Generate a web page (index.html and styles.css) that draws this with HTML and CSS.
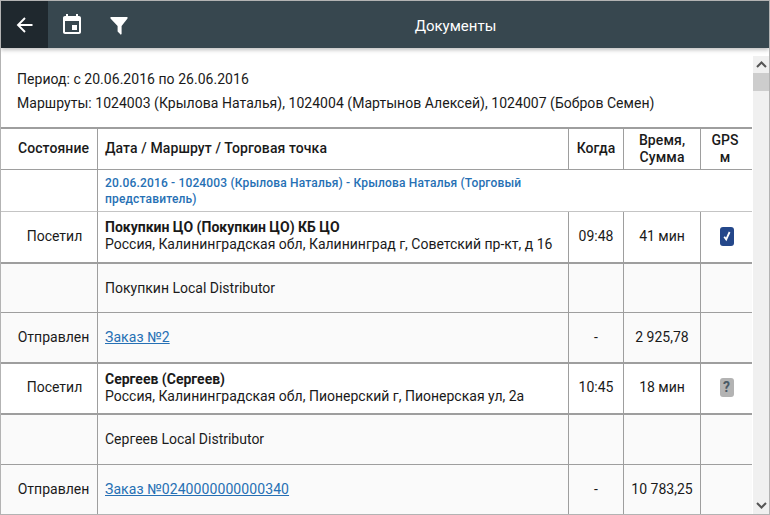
FILE: index.html
```html
<!DOCTYPE html>
<html lang="ru">
<head>
<meta charset="utf-8">
<title>Документы</title>
<link rel="stylesheet" href="styles.css">
</head>
<body>
<div class="window">
  <header class="topbar">
    <button class="tb-btn tb-active" aria-label="Назад">
      <svg width="24" height="24" viewBox="0 0 24 24"><path fill="none" stroke="#fff" stroke-width="1.9" d="M19.5 12H5.5M12 5l-7 7 7 7"/></svg>
    </button>
    <button class="tb-btn" aria-label="Календарь">
      <svg width="24" height="24" viewBox="0 0 24 24"><path fill="#fff" d="M17 12h-5v5h5v-5zM16 1v2H8V1H6v2H5c-1.11 0-2 .9-2 2v14c0 1.1.89 2 2 2h14c1.1 0 2-.9 2-2V5c0-1.1-.9-2-2-2h-1V1h-2zm3 18H5V8h14v11z"/></svg>
    </button>
    <button class="tb-btn" aria-label="Фильтр">
      <svg width="24" height="24" viewBox="0 0 24 24"><path fill="#fff" d="M3.5 4h17v1.4L14.6 13v8l-.8.8-3.2-3.2V13L3.5 5.4z"/></svg>
    </button>
    <h1 class="title">Документы</h1>
  </header>
  <div class="main">
    <div class="content">
      <div class="summary">
        <p>Период: с 20.06.2016 по 26.06.2016</p>
        <p>Маршруты: 1024003 (Крылова Наталья), 1024004 (Мартынов Алексей), 1024007 (Бобров Семен)</p>
      </div>
      <table class="grid">
        <colgroup>
          <col class="c1"><col class="c2"><col class="c3"><col class="c4"><col class="c5">
        </colgroup>
        <thead>
          <tr class="r-head">
            <th class="state">Состояние</th>
            <th class="left">Дата / Маршрут / Торговая точка</th>
            <th>Когда</th>
            <th class="two">Время,<br>Сумма</th>
            <th class="gps two">GPS<br>м</th>
          </tr>
        </thead>
        <tbody>
          <tr class="r-group">
            <td></td>
            <td colspan="4" class="group">20.06.2016 - 1024003 (Крылова Наталья) - Крылова Наталья (Торговый<br>представитель)</td>
          </tr>
          <tr class="r-visit">
            <td class="state">Посетил</td>
            <td class="left"><b>Покупкин ЦО (Покупкин ЦО) КБ ЦО</b><br>Россия, Калининградская обл, Калининград г, Советский пр-кт, д 16</td>
            <td>09:48</td>
            <td>41 мин</td>
            <td><span class="badge badge-ok"><svg width="10" height="12" viewBox="0 0 10 12"><path fill="none" stroke="#fff" stroke-width="1.8" d="M2.2 6.8l2 2.6L7.6 2"/></svg></span></td>
          </tr>
          <tr class="r-sub h49">
            <td></td>
            <td class="left">Покупкин Local Distributor</td>
            <td></td><td></td><td></td>
          </tr>
          <tr class="r-sub r-last">
            <td class="state">Отправлен</td>
            <td class="left"><a href="#">Заказ №2</a></td>
            <td>-</td>
            <td>2 925,78</td>
            <td></td>
          </tr>
          <tr class="r-visit h51">
            <td class="state">Посетил</td>
            <td class="left"><b>Сергеев (Сергеев)</b><br>Россия, Калининградская обл, Пионерский г, Пионерская ул, 2а</td>
            <td>10:45</td>
            <td>18 мин</td>
            <td><span class="badge badge-unk">?</span></td>
          </tr>
          <tr class="r-sub">
            <td></td>
            <td class="left">Сергеев Local Distributor</td>
            <td></td><td></td><td></td>
          </tr>
          <tr class="r-sub r-last">
            <td class="state">Отправлен</td>
            <td class="left"><a href="#">Заказ №0240000000000340</a></td>
            <td>-</td>
            <td>10 783,25</td>
            <td></td>
          </tr>
        </tbody>
      </table>
    </div>
    <div class="scrollbar">
      <div class="sb-arrow"><svg width="11" height="7" viewBox="0 0 11 7"><path fill="none" stroke="#555" stroke-width="2" d="M1 6l4.5-4.5L10 6"/></svg></div>
      <div class="sb-track"><div class="sb-thumb"></div></div>
      <div class="sb-arrow"><svg width="11" height="7" viewBox="0 0 11 7"><path fill="none" stroke="#555" stroke-width="2" d="M1 1l4.5 4.5L10 1"/></svg></div>
    </div>
  </div>
</div>
</body>
</html>
```

FILE: styles.css
```css
* { box-sizing: border-box; }
html, body { margin: 0; padding: 0; height: 100%; overflow: hidden; }
body {
  font-family: Roboto, "Liberation Sans", sans-serif;
  font-size: 14px;
  color: #1a1a1a;
  background: #fff;
}
.window {
  width: 770px;
  height: 515px;
  border: 1px solid #b3b3b3;
  display: flex;
  flex-direction: column;
  overflow: hidden;
}
.topbar {
  flex: none;
  height: 47px;
  background: #37474f;
  display: flex;
  align-items: center;
  box-shadow: 0 2px 4px rgba(0,0,0,.25);
  z-index: 1;
}
.tb-btn {
  width: 47px;
  height: 47px;
  flex: none;
  border: 0;
  padding: 0;
  background: none;
  display: flex;
  align-items: center;
  justify-content: center;
}
.tb-active { background: #1f282e; }
.title {
  flex: 1;
  margin: 0;
  padding-top: 2px;
  text-align: center;
  font-size: 15px;
  font-weight: 400;
  color: #fff;
}
.main { flex: 1; display: flex; min-height: 0; }
.content { width: 752px; flex: none; overflow: hidden; }
.summary { padding: 21px 16px 0; height: 79px; letter-spacing: .035px; }
.summary p { margin: 0 0 4px; line-height: 20px; }
.grid {
  width: 751px;
  table-layout: fixed;
  border-collapse: separate;
  border-spacing: 0;
}
.c1 { width: 97px; }
.c2 { width: 471px; }
.c3 { width: 55px; }
.c4 { width: 77px; }
.c5 { width: 51px; }
th, td {
  padding: 0 0 2px;
  text-align: center;
  vertical-align: middle;
  border-right: 1px solid #9e9e9e;
  border-bottom: 1px solid #9e9e9e;
  line-height: 17px;
}
th:last-child, td:last-child { border-right: 0; }
th {
  font-weight: 500;
  letter-spacing: .1px;
  border-top: 2px solid #9e9e9e;
}
.state { padding-left: 9px; }
.left { text-align: left; padding-left: 7px; }
.r-head th { height: 43px; }
.r-head .two { padding-bottom: 0; }
.r-head .gps { padding-right: 3px; }
.r-group td { height: 42px; border-bottom-color: #c4c4c4; padding: 0; }
.r-group .group {
  text-align: left;
  padding-left: 7px;
  font-size: 12px;
  font-weight: 500;
  line-height: 16px;
  letter-spacing: .165px;
  color: #2670b4;
  border-right: 0;
}
.r-visit td { height: 52px; border-bottom-width: 2px; }
.r-visit .state { padding-left: 11px; }
.r-visit.h51 td { height: 51px; }
.r-sub td { background: #fafafa; height: 50px; padding-bottom: 0; }
.r-sub.h49 td { height: 49px; }
.r-last td { border-bottom-width: 2px; height: 51px; }
a { color: #2670b4; letter-spacing: .09px; }
.badge {
  display: inline-flex;
  width: 14px;
  height: 19px;
  border-radius: 3px;
  align-items: center;
  justify-content: center;
  vertical-align: middle;
}
.badge-ok { background: #24478a; }
.badge-unk { background: #b3b3b3; color: #4a5a66; font-size: 14px; font-weight: 700; }
.scrollbar {
  width: 16px;
  flex: none;
  margin-top: 8px;
  background: #f0f0f0;
  display: flex;
  flex-direction: column;
}
.sb-arrow { height: 17px; flex: none; display: flex; align-items: center; justify-content: center; }
.sb-track { flex: 1; }
.sb-thumb { height: 18px; background: #cdcdcd; }
```
